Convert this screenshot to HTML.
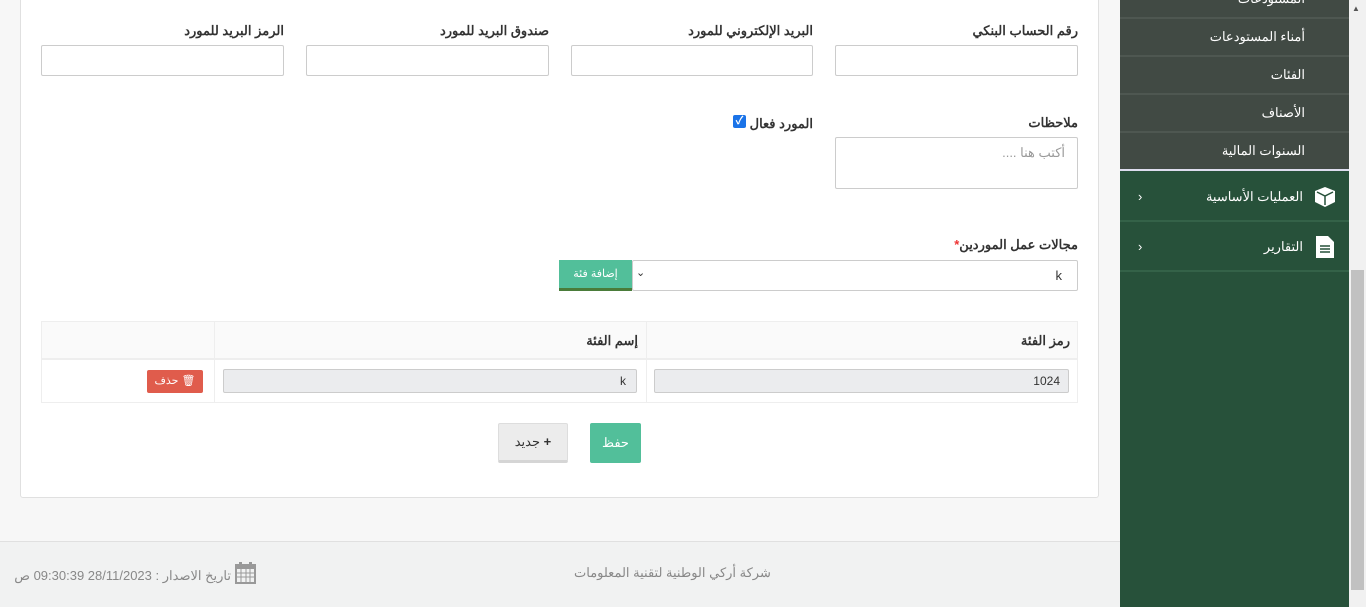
<!DOCTYPE html>
<html dir="rtl"><head><meta charset="utf-8"><style>
*{box-sizing:border-box;margin:0;padding:0}
body{width:1366px;height:607px;overflow:hidden;background:#f7f7f7;font-family:"Liberation Sans","Noto Sans CJK SC",sans-serif;font-size:13px;color:#333;position:relative}
.a{position:absolute}
.card{left:20px;top:-10px;width:1079px;height:508px;background:#fff;border:1px solid #e0e0e0;border-radius:3px}
.lbl{font-weight:bold;font-size:13px;color:#333;text-align:right;white-space:nowrap}
.inp{background:#fff;border:1px solid #ccc;border-radius:2px}
.side{left:1120px;top:0;width:229px;height:607px;background:#27513a}
.mi{position:absolute;left:0;width:229px;height:38px;background:#414a44;border-bottom:2px solid #4e5751;color:#fff;font-size:13px;text-align:right;padding-right:44px;line-height:36px}
.gi{position:absolute;left:0;width:229px;height:50px;border-bottom:2px solid #346248;color:#fff;font-size:13px;line-height:50px}
</style></head><body>
<div class="a card"></div>

<div class="a lbl" style="right:288px;top:23px">رقم الحساب البنكي</div>
<div class="a lbl" style="right:553px;top:23px">البريد الإلكتروني للمورد</div>
<div class="a lbl" style="right:817px;top:23px">صندوق البريد للمورد</div>
<div class="a lbl" style="right:1082px;top:23px">الرمز البريد للمورد</div>
<div class="a inp" style="left:835px;top:45px;width:243px;height:31px"></div>
<div class="a inp" style="left:571px;top:45px;width:242px;height:31px"></div>
<div class="a inp" style="left:306px;top:45px;width:243px;height:31px"></div>
<div class="a inp" style="left:41px;top:45px;width:243px;height:31px"></div>

<div class="a lbl" style="right:288px;top:115px">ملاحظات</div>
<div class="a inp" style="left:835px;top:137px;width:243px;height:52px;color:#999;padding:7px 12px;text-align:right">أكتب هنا ....</div>
<div class="a lbl" style="right:553px;top:116px">المورد فعال</div>
<div class="a" style="left:733px;top:115px;width:13px;height:13px;background:#1a73e8;border-radius:2px;color:#fff;font-size:11px;line-height:13px;text-align:center;font-weight:bold">✓</div>

<div class="a lbl" style="right:288px;top:237px">مجالات عمل الموردين<span style="color:#e33">*</span></div>
<div class="a inp" style="left:632px;top:260px;width:446px;height:31px;padding-right:15px;line-height:29px;font-size:13px">k</div>
<div class="a" style="left:636px;top:266px;font-size:11px">&#x2304;</div>
<div class="a" style="left:559px;top:260px;width:73px;height:31px;background:#52bf9a;border-bottom:3px solid #4a7c3a;color:#fff;font-size:11px;text-align:center;line-height:28px">إضافة فئة</div>

<div class="a" style="left:41px;top:321px;width:1037px;height:82px;border:1px solid #eee"></div>
<div class="a" style="left:42px;top:322px;width:1035px;height:38px;background:#fafafa;border-bottom:2px solid #eee"></div>
<div class="a" style="left:214px;top:322px;width:1px;height:80px;background:#eee"></div>
<div class="a" style="left:646px;top:322px;width:1px;height:80px;background:#eee"></div>
<div class="a lbl" style="right:296px;top:333px">رمز الفئة</div>
<div class="a lbl" style="right:728px;top:333px">إسم الفئة</div>
<div class="a" style="left:654px;top:369px;width:415px;height:24px;background:#ebecee;border:1px solid #ccc;border-radius:2px;text-align:right;padding-right:8px;line-height:22px;font-size:12px">1024</div>
<div class="a" style="left:223px;top:369px;width:414px;height:24px;background:#ebecee;border:1px solid #ccc;border-radius:2px;text-align:right;padding-right:10px;line-height:22px;font-size:12px">k</div>
<div class="a" style="left:147px;top:370px;width:56px;height:23px;background:#e05c4c;border-radius:2px;color:#fff;font-size:11px;text-align:center;line-height:22px">🗑 حذف</div>

<div class="a" style="left:590px;top:423px;width:51px;height:40px;background:#52bf9a;border-radius:2px;color:#fff;text-align:center;line-height:40px">حفظ</div>
<div class="a" style="left:498px;top:423px;width:70px;height:40px;background:#ececec;border:1px solid #ddd;border-bottom:3px solid #d5d5d5;border-radius:2px;color:#333;text-align:center;line-height:36px"><b>+</b> جديد</div>

<div class="a" style="left:0;top:541px;width:1120px;height:66px;background:#f1f2f2;border-top:1px solid #e0e0e0"></div>
<div class="a" style="left:574px;top:565px;color:#888;font-size:13px">شركة أركي الوطنية لتقنية المعلومات</div>
<div class="a" style="right:1135px;top:568px;color:#888;font-size:13px;white-space:nowrap">تاريخ الاصدار : <span dir="ltr">09:30:39 28/11/2023</span> ص</div>
<svg class="a" style="left:235px;top:562px" width="21" height="22" viewBox="0 0 21 22"><rect x="1" y="3" width="19" height="18" fill="none" stroke="#999" stroke-width="2"/><rect x="1" y="3" width="19" height="4" fill="#999"/><path d="M1 11H20M1 15H20M6 7V21M11 7V21M15 7V21" stroke="#999"/><rect x="4" y="0" width="3" height="5" fill="#999"/><rect x="14" y="0" width="3" height="5" fill="#999"/></svg>

<div class="a side">
<div class="mi" style="top:-19px">المستودعات</div>
<div class="mi" style="top:19px">أمناء المستودعات</div>
<div class="mi" style="top:57px">الفئات</div>
<div class="mi" style="top:95px">الأصناف</div>
<div class="mi" style="top:133px;border-bottom:2px solid #dde">السنوات المالية</div>
<div class="gi" style="top:172px"><span style="position:absolute;right:46px">العمليات الأساسية</span><svg style="position:absolute;right:13px;top:14px" width="22" height="22" viewBox="0 0 22 22"><path d="M11 1L21 5V16L11 21L1 16V5Z" fill="#fff"/><path d="M3 6L11 10L19 6M11 10V19" stroke="#27513a" stroke-width="1.5" fill="none"/></svg><span style="position:absolute;left:18px">‹</span></div>
<div class="gi" style="top:222px"><span style="position:absolute;right:46px">التقارير</span><svg style="position:absolute;right:13px;top:13px" width="22" height="24" viewBox="0 0 22 24"><path d="M2 1H14L20 7V23H2Z" fill="#fff"/><path d="M6 11H16M6 14H16M6 17H16" stroke="#27513a" stroke-width="1.5"/></svg><span style="position:absolute;left:18px">‹</span></div>
</div>
<div class="a" style="left:1349px;top:0;width:17px;height:607px;background:#f1f1f1"></div>
<div class="a" style="left:1351px;top:270px;width:13px;height:320px;background:#c1c1c1"></div>
<div class="a" style="left:1352px;top:4px;font-size:8px;color:#555">▲</div>
</body></html>
